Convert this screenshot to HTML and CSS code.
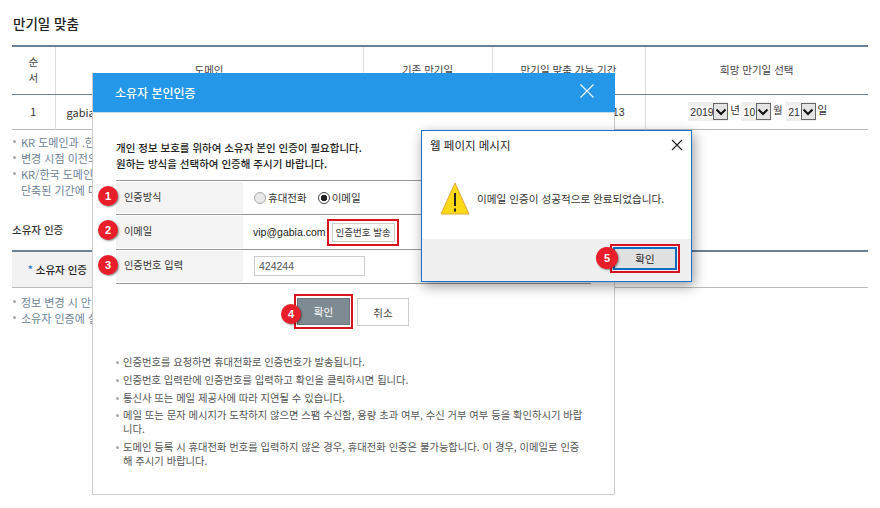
FILE: index.html
```html
<!DOCTYPE html>
<html lang="ko">

<head>
    <meta charset="utf-8">
    <title>만기일 맞춤</title>
    <link rel="stylesheet" href="styles.css">
</head>

<body>
    <div class="page">
        <h2 class="page-title">만기일 맞춤</h2>
        <table class="grid">
            <colgroup>
                <col class="c1"><col class="c2"><col class="c3"><col class="c4"><col class="c5">
            </colgroup>
            <tr class="grid-head">
                <th>순<br>서</th>
                <th>도메인</th>
                <th>기존 만기일</th>
                <th>만기일 맞춤 가능 기간</th>
                <th>희망 만기일 선택</th>
            </tr>
            <tr class="grid-row">
                <td>1</td>
                <td class="left">gabia</td>
                <td></td>
                <td class="range-end">13</td>
                <td class="date-cell">
                    <span class="date-sel"><span class="date-val w-year">2019</span><span class="date-arrow"><svg width="12" height="8" viewBox="0 0 12 8"><path d="M1.5 1.5 6 6l4.5-4.5" fill="none" stroke="#111" stroke-width="2"/></svg></span></span>년
                    <span class="date-sel"><span class="date-val">10</span><span class="date-arrow"><svg width="12" height="8" viewBox="0 0 12 8"><path d="M1.5 1.5 6 6l4.5-4.5" fill="none" stroke="#111" stroke-width="2"/></svg></span></span>월
                    <span class="date-sel"><span class="date-val">21</span><span class="date-arrow"><svg width="12" height="8" viewBox="0 0 12 8"><path d="M1.5 1.5 6 6l4.5-4.5" fill="none" stroke="#111" stroke-width="2"/></svg></span></span>일
                </td>
            </tr>
        </table>
        <ul class="notes page-notes">
            <li>KR 도메인과 .한국</li>
            <li>변경 시점 이전의</li>
            <li>KR/한국 도메인의<br>단축된 기간에 대</li>
        </ul>
        <h3 class="sub-title">소유자 인증</h3>
        <div class="owner-box">
            <div class="owner-label"><span class="star">*</span> 소유자 인증</div>
        </div>
        <ul class="notes owner-notes">
            <li>정보 변경 시 안</li>
            <li>소유자 인증에 실</li>
        </ul>
    </div>

    <div class="modal">
        <div class="modal-head">
            <span>소유자 본인인증</span>
            <svg width="14" height="14" viewBox="0 0 14 14"><path d="M.5.5l13 13M13.5.5l-13 13" stroke="#fff" stroke-width="1.1" fill="none"/></svg>
        </div>
        <div class="modal-body">
            <p class="intro">개인 정보 보호를 위하여 소유자 본인 인증이 필요합니다.<br>원하는 방식을 선택하여 인증해 주시기 바랍니다.</p>
            <div class="form">
                <div class="form-row">
                    <div class="form-label"><span class="marker m-left">1</span>인증방식</div>
                    <div class="form-value">
                        <span class="radio"></span><span class="radio-text">휴대전화</span>
                        <span class="radio on"></span><span>이메일</span>
                    </div>
                </div>
                <div class="form-row">
                    <div class="form-label"><span class="marker m-left">2</span>이메일</div>
                    <div class="form-value">
                        <span class="email">vip@gabia.com</span>
                        <span class="red-box"><span class="send-btn">인증번호 발송</span></span>
                    </div>
                </div>
                <div class="form-row">
                    <div class="form-label"><span class="marker m-left">3</span>인증번호 입력</div>
                    <div class="form-value">
                        <span class="code-input">424244</span>
                    </div>
                </div>
            </div>
            <div class="modal-btns">
                <span class="red-box ok-wrap"><span class="marker m-ok">4</span><span class="ok-btn">확인</span></span>
                <span class="cancel-btn">취소</span>
            </div>
            <ul class="notes modal-notes">
                <li>인증번호를 요청하면 휴대전화로 인증번호가 발송됩니다.</li>
                <li>인증번호 입력란에 인증번호를 입력하고 확인을 클릭하시면 됩니다.</li>
                <li>통신사 또는 메일 제공사에 따라 지연될 수 있습니다.</li>
                <li>메일 또는 문자 메시지가 도착하지 않으면 스팸 수신함, 용량 초과 여부, 수신 거부 여부 등을 확인하시기 바랍<br>니다.</li>
                <li>도메인 등록 시 휴대전화 번호를 입력하지 않은 경우, 휴대전화 인증은 불가능합니다. 이 경우, 이메일로 인증<br>해 주시기 바랍니다.</li>
            </ul>
        </div>
    </div>

    <div class="alert">
        <div class="alert-title">
            <span>웹 페이지 메시지</span>
            <svg width="12" height="12" viewBox="0 0 12 12"><path d="M1 1l10 10M11 1 1 11" stroke="#222" stroke-width="1.1" fill="none"/></svg>
        </div>
        <div class="alert-body">
            <svg width="30" height="33" viewBox="0 0 30 33">
                <path d="M15 1 29 32H1z" fill="#fcd917" stroke="#e0a93a" stroke-width="1"/>
                <path d="M15 11v13M15 26.5v3" stroke="#222" stroke-width="2" fill="none"/>
            </svg>
            <span>이메일 인증이 성공적으로 완료되었습니다.</span>
        </div>
        <div class="alert-foot">
            <span class="alert-red"><span class="marker m-alert">5</span><span class="alert-btn">확인</span></span>
        </div>
    </div>
</body>

</html>
```
FILE: styles.css
```css
* {
    margin: 0;
    padding: 0;
    box-sizing: border-box;
}

html, body {
    width: 880px;
    height: 508px;
    overflow: hidden;
    background-color: #fff;
}

body {
    font-family: "Noto Sans CJK KR", "Noto Sans", sans-serif;
    font-size: 10.5px;
    color: #333;
}

ul {
    list-style: none;
}

.page {
    padding: 14px 12px 0;
}

.page-title {
    font-size: 13.5px;
    font-weight: 500;
    line-height: 18px;
    color: #222;
    margin-bottom: 13px;
    padding-left: 1px;
}

.grid {
    width: 856px;
    table-layout: fixed;
    border-collapse: collapse;
    border-top: 2px solid #6b8296;
    border-bottom: 1px solid #bbb;
}

.c1 { width: 43px; }
.c2 { width: 308px; }
.c3 { width: 129px; }
.c4 { width: 153px; }
.c5 { width: 223px; }

.grid th, .grid td {
    text-align: center;
    border-left: 1px solid #ddd;
    font-weight: 400;
}

.grid th:first-child, .grid td:first-child {
    border-left: none;
}

.grid-head th {
    height: 48px;
    line-height: 16px;
    border-bottom: 1px solid #6b8296;
    color: #444;
}

.grid-row td {
    height: 35px;
}

.grid .left {
    text-align: left;
    padding-left: 11px;
    font-size: 11px;
}

.grid .range-end {
    text-align: right;
    padding-right: 20px;
    font-family: "Liberation Sans", sans-serif;
}

.grid .date-cell {
    padding-left: 2px;
    white-space: nowrap;
}

.date-sel {
    display: inline-flex;
    align-items: center;
    height: 19px;
    background-color: #eee;
    margin-right: 2px;
    vertical-align: middle;
}

.date-sel:nth-child(2) {
    margin-left: -2px;
}

.date-val {
    width: 15px;
    padding-left: 2px;
    font-family: "Liberation Sans", sans-serif;
    font-size: 10.5px;
    background-color: #f7f7f7;
}

.w-year {
    width: 25px;
}

.date-arrow {
    display: flex;
    align-items: center;
    justify-content: center;
    width: 15px;
    height: 17px;
    background-color: #e4e4e4;
    border: 1px solid #666;
}

.notes li {
    position: relative;
    padding-left: 9px;
    line-height: 16px;
}

.notes li::before {
    content: "";
    position: absolute;
    left: 1px;
    top: 6px;
    width: 3px;
    height: 3px;
    border-radius: 50%;
    background-color: #aaa;
}

.page-notes {
    margin-top: 4px;
    color: #6d8296;
    font-size: 11px;
}

.sub-title {
    font-size: 10.5px;
    font-weight: 500;
    line-height: 16px;
    margin-top: 24px;
    color: #333;
}

.owner-box {
    margin-top: 12px;
    width: 856px;
    height: 38px;
    border-top: 2px solid #6b8296;
    border-bottom: 1px solid #bbb;
}

.owner-label {
    width: 80px;
    height: 100%;
    display: flex;
    align-items: center;
    justify-content: flex-end;
    gap: 3px;
    padding-right: 5px;
    background-color: #f2f2f2;
    color: #222;
    font-weight: 500;
}

.star {
    color: #1a6fc0;
}

.owner-notes {
    margin-top: 6px;
    color: #6d8296;
    font-size: 11px;
}

/* modal over the page */
.modal {
    position: absolute;
    left: 92px;
    top: 73px;
    width: 523px;
    height: 422px;
    background-color: #fff;
    border: 1px solid #ccc;
    border-top: none;
}

.modal-head {
    display: flex;
    align-items: center;
    justify-content: space-between;
    height: 40px;
    margin: 0 -1px 0 0;
    padding: 0 21px 1px 22px;
    background-color: #2497e8;
    border-bottom: 1px solid #c5dff3;
    color: #fff;
    font-size: 12px;
    font-weight: 500;
}

.modal-head svg {
    margin-top: -3px;
}

.modal-body {
    padding: 27px 23px 0;
}

.intro {
    font-weight: 500;
    line-height: 16px;
    color: #222;
    margin-bottom: 8px;
}

.form {
    border-top: 1px solid #999;
}

.form-row {
    display: flex;
    height: 34.4px;
    border-bottom: 1px solid #999;
}

.form-label {
    position: relative;
    display: flex;
    align-items: center;
    width: 127px;
    padding: 0 0 3px 8px;
    margin: 1px 0;
    background-color: #f3f3f3;
    font-size: 10.2px;
}

.form-value {
    display: flex;
    align-items: center;
    padding-left: 11px;
    flex: 1;
}

.radio {
    width: 12px;
    height: 12px;
    margin-right: 2px;
    border-radius: 50%;
    border: 1px solid #aaa;
    background-color: #e8e8e8;
}

.radio.on {
    border-color: #444;
    background: radial-gradient(circle, #222 0 3px, #fff 3.5px);
}

.radio-text {
    margin-right: 11px;
}

.email {
    font-family: "Liberation Sans", sans-serif;
    font-size: 10.5px;
    color: #222;
    margin-left: -1px;
    margin-right: 1px;
}

.red-box {
    display: inline-flex;
    border: 2px solid #d8121f;
}

.send-btn {
    height: 19px;
    line-height: 16px;
    padding: 0 3px;
    margin: 2px 2px 2px 3px;
    border: 1px solid #ccc;
    font-size: 9.5px;
    white-space: nowrap;
}

.code-input {
    display: block;
    width: 111px;
    height: 20px;
    line-height: 18px;
    padding-left: 4px;
    border: 1px solid #ccc;
    font-family: "Liberation Sans", sans-serif;
    font-size: 10.5px;
    color: #555;
}

.modal-btns {
    display: flex;
    justify-content: center;
    align-items: flex-start;
    gap: 4px;
    margin-top: 10px;
    padding-right: 4px;
}

.ok-wrap {
    position: relative;
    padding: 2px 1px;
}

.ok-btn {
    display: flex;
    align-items: center;
    justify-content: center;
    width: 53px;
    height: 27px;
    background-color: #7f8b93;
    border: 1px solid #69747c;
    color: #fff;
}

.cancel-btn {
    display: flex;
    align-items: center;
    justify-content: center;
    width: 52px;
    height: 28px;
    margin-top: 4px;
    border: 1px solid #ccc;
    color: #444;
}

.modal-notes {
    margin-top: 26px;
    color: #555;
    font-size: 10.3px;
}

.modal-notes li {
    line-height: 14px;
    margin-bottom: 3.7px;
    padding-left: 7px;
}

.modal-notes li::before {
    left: 0;
}

.marker {
    position: absolute;
    display: flex;
    align-items: center;
    justify-content: center;
    width: 20px;
    height: 20px;
    border-radius: 50%;
    background-color: #e81f2a;
    box-shadow: 1px 1px 2px rgba(0, 0, 0, .45);
    color: #fff;
    font-family: "Liberation Sans", sans-serif;
    font-size: 11px;
    font-weight: 700;
}

.m-left {
    left: -18px;
    top: 4px;
}

.m-ok {
    left: -15px;
    top: 8px;
}

.m-alert {
    left: -16px;
    top: 1px;
    width: 22px;
    height: 22px;
}

/* message box */
.alert {
    position: absolute;
    left: 421px;
    top: 130px;
    width: 271px;
    height: 152px;
    display: flex;
    flex-direction: column;
    background-color: #fff;
    border: 1px solid #1a73c8;
    box-shadow: 2px 4px 12px rgba(0, 0, 0, .4);
}

.alert-title {
    display: flex;
    align-items: center;
    justify-content: space-between;
    height: 28px;
    padding: 0 8px 0 8px;
    font-size: 11.5px;
    color: #222;
}

.alert-body {
    display: flex;
    align-items: center;
    gap: 7px;
    height: 80px;
    padding: 0 0 2px 18px;
    font-size: 10.6px;
    color: #333;
}

.alert-foot {
    flex: 1;
    display: flex;
    justify-content: flex-end;
    align-items: flex-start;
    padding: 5px 11px 0 0;
    background-color: #f0f0f0;
}

.alert-red {
    position: relative;
    display: flex;
    padding: 1px;
    border: 2px solid #d8121f;
}

.alert-btn {
    display: flex;
    align-items: center;
    justify-content: center;
    width: 64px;
    height: 23px;
    background-color: #e1e1e1;
    border: 2px solid #0d6cc0;
    color: #222;
}
```
